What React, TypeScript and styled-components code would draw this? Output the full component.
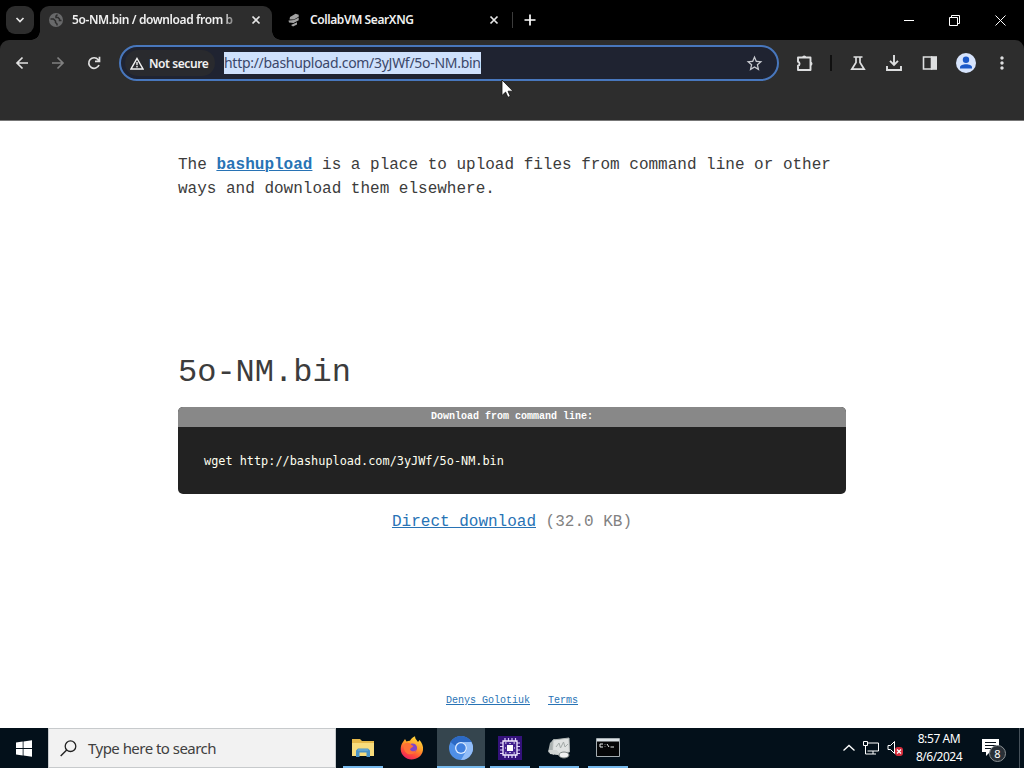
import React from "react";
import styled, { createGlobalStyle, css } from "styled-components";
import { MdMoreVert, MdStarBorder } from "react-icons/md";

const GlobalStyle = createGlobalStyle`
    * {
        box-sizing: border-box;
    }

    body {
        margin: 0;
        overflow: hidden;
        background-color: #fff;
    }
`;

const uiFont = `"Noto Sans", "Open Sans", sans-serif`;
const monoFont = `"Liberation Mono", "Courier New", monospace`;

type IconPropsType = {
    size?: number;
    children: React.ReactNode;
}

// Line icon drawn in a square view box of its own size
const LineIcon: React.FC<IconPropsType> = ({ size = 16, children }) => (
    <Svg width={size} height={size} viewBox={`0 0 ${size} ${size}`}>
        <g fill="none" stroke="currentColor" strokeWidth="1.7">{children}</g>
    </Svg>
);

const TabStrip: React.FC = () => (
    <StyledTabStrip>
        <TabSearch>
            <LineIcon size={10}><path d="M1.5 3 5 6.5 8.5 3" /></LineIcon>
        </TabSearch>
        <Tab $active>
            <Svg width="14" height="14" viewBox="0 0 14 14">
                <circle cx="7" cy="7" r="7" fill="#68696a" />
                <path d="M1.500 6h3l2 2v1.500L8 11v1.500M8.500 1.500 7 3v1.500h2L10.500 6v1.500h2" fill="none" stroke="#2d2d2d" strokeWidth="1.500" />
            </Svg>
            <TabTitle $faded>5o-NM.bin / download from b</TabTitle>
            <LineIcon size={10}><path d="m1.500 1.500 7 7m0-7-7 7" /></LineIcon>
        </Tab>
        <Tab>
            <Svg width="14" height="14" viewBox="0 0 14 14">
                <path d="M3 4 8.500 .8l3.200 1v2L7 6.500H2.500zM1.500 7.500 7 7l4.700-2.500v2.700L6.500 10 2 9.500zM4 12l6-2.800v2.300L6 13.500z" fill="#a2a2a2" />
            </Svg>
            <TabTitle>CollabVM SearXNG</TabTitle>
            <LineIcon size={10}><path d="m1.500 1.500 7 7m0-7-7 7" /></LineIcon>
        </Tab>
        <TabDivider />
        <NewTab>
            <LineIcon size={12}><path d="M6 .5v11M.5 6h11" /></LineIcon>
        </NewTab>
        <WindowControls>
            <Svg width="10" height="11" viewBox="0 0 10 11"><path d="M0 5.500h10" stroke="#fff" /></Svg>
            <Svg width="11" height="11" viewBox="0 0 11 11"><path d="M.5 2.500h8v8h-8zM2.500 2.500v-2h8v8h-2" fill="none" stroke="#fff" /></Svg>
            <Svg width="11" height="11" viewBox="0 0 11 11"><path d="m.5.5 10 10m0-10-10 10" stroke="#fff" /></Svg>
        </WindowControls>
    </StyledTabStrip>
);

const Toolbar: React.FC = () => (
    <StyledToolbar>
        <NavButton>
            <LineIcon size={14}><path d="M13 7H2m5.500-5.500L2 7l5.500 5.500" /></LineIcon>
        </NavButton>
        <NavButton $disabled>
            <LineIcon size={14}><path d="M1 7h11M6.500 1.500 12 7l-5.500 5.500" /></LineIcon>
        </NavButton>
        <NavButton>
            <LineIcon size={14}><path d="M12 9a5.300 5.300 0 1 1-.8-5.300L12.300 5M12.500.8V5.300H8" /></LineIcon>
        </NavButton>
        <AddressBar>
            <SecurityChip>
                <Svg width="14" height="13" viewBox="0 0 14 13">
                    <path d="M7 1.500 13 12H1z" fill="none" stroke="currentColor" strokeWidth="1.500" />
                    <path d="M7 5v3.200m0 .9v1.400" stroke="currentColor" strokeWidth="1.400" />
                </Svg>
                <span>Not secure</span>
            </SecurityChip>
            <SelectedUrl>http://bashupload.com/3yJWf/5o-NM.bin</SelectedUrl>
            <MdStarBorder size={19} color="#c7c9cf" />
            <Cursor width="13" height="20" viewBox="0 0 13 20">
                <path d="M1 1v15.500l3.600-3.400 2.300 5.200 2.400-1L7 12.200h5z" fill="#fff" stroke="#111" strokeWidth=".8" />
            </Cursor>
        </AddressBar>
        <Actions>
            <LineIcon size={18}>
                <path d="M2 3.500h12.500v12.500H2v-4.300a2 2 0 0 0 0-3.900z" strokeWidth="1.900" strokeLinejoin="round" />
                <path d="M6.200 3.500a2 2 0 0 1 4 0zM14.500 7.700a2 2 0 0 1 0 4z" fill="currentColor" stroke="none" />
            </LineIcon>
            <ActionDivider />
            <LineIcon size={16}>
                <path d="M3.500 2h9M6 2v5.500L1.800 14.200h12.400L10 7.500V2" />
            </LineIcon>
            <LineIcon size={16}>
                <path d="M8 0v9.500M4 5.800l4 4 4-4M1 11v4h14v-4" strokeWidth="1.900" />
            </LineIcon>
            <Svg width="16" height="16" viewBox="0 0 16 16">
                <path d="M1.500 2h8v12h-8z" fill="none" stroke="currentColor" strokeWidth="1.600" />
                <path d="M9 1.200h6v13.600H9z" fill="currentColor" />
            </Svg>
            <Svg width="20" height="20" viewBox="0 0 20 20">
                <circle cx="10" cy="10" r="10" fill="#d7e4fc" />
                <circle cx="10" cy="6.800" r="3.200" fill="#1c59c8" />
                <path d="M4 15.500v-1.300c0-4 12-4 12 0v1.300z" fill="#1c59c8" />
            </Svg>
            <MdMoreVert size={20} />
        </Actions>
    </StyledToolbar>
);

const DownloadPage: React.FC = () => (
    <StyledPage>
        <Content>
            <Intro>
                The <PageLink $bold href="#">bashupload</PageLink> is a place to upload files from command line or other ways and download them elsewhere.
            </Intro>
            <FileName>5o-NM.bin</FileName>
            <CommandBox>
                <CommandTitle>Download from command line:</CommandTitle>
                <Command>wget http://bashupload.com/3yJWf/5o-NM.bin</Command>
            </CommandBox>
            <DirectDownload>
                <PageLink href="#">Direct download</PageLink> (32.0 KB)
            </DirectDownload>
            <Footer>
                <PageLink href="#">Denys Golotiuk</PageLink>
                <PageLink href="#">Terms</PageLink>
            </Footer>
        </Content>
    </StyledPage>
);

const Taskbar: React.FC = () => (
    <StyledTaskbar>
        <StartButton>
            <Svg width="16" height="17" viewBox="0 0 16 17">
                <path d="M0 2.500 6.700 1.500v6.500H0zM7.500 1.400 16 .2V8H7.500zM0 8.900h6.700v6.500L0 14.500zM7.500 8.900H16v7.800l-8.500-1.200z" fill="#fff" />
            </Svg>
        </StartButton>
        <SearchBox>
            <Svg width="17" height="17" viewBox="0 0 17 17">
                <circle cx="10.500" cy="6.200" r="5.300" fill="none" stroke="#222" strokeWidth="1.300" />
                <path d="m6.700 10-6 6" stroke="#222" strokeWidth="1.400" />
            </Svg>
            <span>Type here to search</span>
        </SearchBox>
        <TaskList>
            <TaskButton $running>
                <Svg width="22" height="20" viewBox="0 0 22 20">
                    <path d="M0 1h8l2 2h12v15H0z" fill="#e6b94a" />
                    <path d="M0 5h22v13H0z" fill="#f8dc7c" />
                    <path d="M4 19v-6.500l2-2h10l2 2V19h-3.500v-4.500h-7V19z" fill="#4a93c6" />
                    <path d="M6 12h10" stroke="#79b5da" />
                </Svg>
            </TaskButton>
            <TaskButton>
                <Svg width="24" height="24" viewBox="0 0 24 24">
                    <defs>
                        <linearGradient id="fox" x1="0.8" y1="0" x2="0.3" y2="1">
                            <stop offset="0" stopColor="#ffe23f" />
                            <stop offset=".45" stopColor="#ff9a28" />
                            <stop offset=".75" stopColor="#ff4a3a" />
                            <stop offset="1" stopColor="#ec2161" />
                        </linearGradient>
                    </defs>
                    <path d="M3 6 5 3l1.500 2.500C8 5 9 4.500 10 4.800 11 2.500 13 1 15 .3c0 3 2 4 3 5.700l1.500-2C22 7 23.500 10 23 14c-.8 6-6 9.500-11.500 9.500S1 19 .7 13.500C.6 10 1.500 8 3 6z" fill="url(#fox)" />
                    <circle cx="12.500" cy="12" r="4.600" fill="#8145c8" />
                    <path d="M4.500 7.500c3-1.500 5.500-1 7 1.500l2 1c-1 2-3 1.500-3.500 3.500 1 2 4 2.500 6 .5-1 5-8 6-11 1.500-1.500-2.500-1.500-5.500-.5-8z" fill="#ff7136" />
                </Svg>
            </TaskButton>
            <TaskButton $running $active>
                <Svg width="24" height="24" viewBox="0 0 24 24">
                    <circle cx="12" cy="12" r="12" fill="#4f8fe6" />
                    <path d="M1.600 6A12 12 0 0 1 22.400 6H12a6 6 0 0 0-5.600 4z" fill="#2c69c4" />
                    <path d="M22.400 6A12 12 0 0 1 12 24l5.200-9A6 6 0 0 0 12 6z" fill="#92bdf8" />
                    <circle cx="12" cy="12" r="6" fill="#dceaff" />
                    <circle cx="12" cy="12" r="4.700" fill="#4080df" />
                </Svg>
            </TaskButton>
            <TaskButton $running>
                <Svg width="24" height="24" viewBox="0 0 24 24">
                    <path d="M0 0h24v24H0z" fill="#34127b" />
                    <path d="M7 2v20M10.500 2v20M14 2v20M17.500 2v20M2 7h20M2 10.500h20M2 14h20M2 17.500h20" stroke="#dacbff" strokeWidth="1.200" />
                    <path d="M5 5h14v14H5z" fill="#42208f" stroke="#f4edff" strokeWidth="1.300" />
                    <path d="M9 9h6v6H9z" fill="#fff" />
                    <path d="M7 7h1.500m7 0H17M7 17h1.500m7 0H17M7 12h1m8 0h1M12 7v1m0 8v1" stroke="#fff" strokeWidth="1.200" />
                </Svg>
            </TaskButton>
            <TaskButton $running>
                <Svg width="24" height="22" viewBox="0 0 24 22">
                    <path d="m3 6 4-4 2 1-2 15-6-3z" fill="#a9b0af" />
                    <path d="m6 3 16-2 .5 14-14 2-3-3z" fill="#dfe2e1" stroke="#b3b8b7" />
                    <path d="m9 10 3-4 1.500 5 3-6 1.500 5 3-3" fill="none" stroke="#a3aaa8" />
                    <path d="M1.500 13h8l3 3H20v3l-5 2-4-3-8-1z" fill="#d1d5d4" />
                    <ellipse cx="17" cy="18" rx="5" ry="3" fill="#f0f1f1" stroke="#7d8483" />
                </Svg>
            </TaskButton>
            <TaskButton $running>
                <Svg width="24" height="20" viewBox="0 0 24 20">
                    <path d="M.5.5h23v18H.5z" fill="#050607" stroke="#a5adb1" />
                    <path d="M1 1h22v2.500H1z" fill="#dce3e7" />
                    <path d="M7 6H4v3h3m2-2.500v.5m0 1.500V9m2-3 2 3m1.500 0H18" fill="none" stroke="#e8eaea" />
                </Svg>
            </TaskButton>
        </TaskList>
        <Tray>
            <Svg width="12" height="8" viewBox="0 0 12 8"><path d="m.5 6.500 5.500-5 5.500 5" fill="none" stroke="#fff" strokeWidth="1.300" /></Svg>
            <Svg width="18" height="16" viewBox="0 0 18 16">
                <path d="M5.500 3h11v8h-11m5.500 0v3m-4 0h7M3.500 6v8H7M1.500 1.500h4v4h-4z" fill="none" stroke="#fff" />
            </Svg>
            <Svg width="18" height="17" viewBox="0 0 18 17">
                <path d="M1 5.500h2.500l4-4v12l-4-4H1z" fill="none" stroke="#fff" />
                <rect x="8" y="7" width="8" height="9" rx="3" fill="#d62c3b" />
                <path d="m10 9.500 4 4m0-4-4 4" stroke="#fff" strokeWidth="1.300" />
            </Svg>
            <Clock>
                <ClockLine>8:57 AM</ClockLine>
                <ClockLine $date>8/6/2024</ClockLine>
            </Clock>
            <Notifications>
                <Svg width="18" height="18" viewBox="0 0 18 18">
                    <path d="M0 0h17v13H8l-4 4v-4H0z" fill="#fff" />
                    <path d="M3 3.500h11M3 6.500h11M3 9.500h8" stroke="#07111b" />
                </Svg>
                <Count>8</Count>
            </Notifications>
            <ShowDesktop />
        </Tray>
    </StyledTaskbar>
);

// Whole desktop: browser window above the taskbar
const App: React.FC = () => (
    <Desktop>
        <GlobalStyle />
        <TabStrip />
        <Toolbar />
        <DownloadPage />
        <Taskbar />
    </Desktop>
);

export default App;

const Desktop = styled.div`
    display: flex;
    flex-direction: column;
    width: 1024px;
    height: 768px;
    overflow: hidden;
    background-color: #000;
    font-family: ${uiFont};
`;

const Svg = styled.svg`
    display: block;
    flex-shrink: 0;
`;

const StyledTabStrip = styled.div`
    display: flex;
    align-items: center;
    height: 40px;
    padding-left: 6px;
    background-color: #000;
    color: #e6e6e6;
`;

const TabSearch = styled.div`
    display: flex;
    align-items: center;
    justify-content: center;
    width: 28px;
    height: 28px;
    margin-right: 6px;
    border-radius: 9px;
    background-color: #2d2d2d;
`;

const Tab = styled.div<{ $active?: boolean }>`
    display: flex;
    align-items: center;
    width: 232px;
    height: 34px;
    margin-top: 6px;
    padding: 0 11px 6px 9px;
    border-radius: 9px 9px 0 0;
    position: relative;

    ${({ $active }) => $active ? css`
        background-color: #2d2d2d;

        /* curved feet of the selected tab */
        &::before,
        &::after {
            content: "";
            position: absolute;
            bottom: 0;
            width: 9px;
            height: 9px;
        }

        &::before {
            right: 100%;
            background: radial-gradient(circle at 0 0, transparent 8.5px, #2d2d2d 9px);
        }

        &::after {
            left: 100%;
            background: radial-gradient(circle at 100% 0, transparent 8.5px, #2d2d2d 9px);
        }
    ` : css`
        padding-left: 15px;
        padding-right: 5px;
    `}
`;

const TabTitle = styled.span<{ $faded?: boolean }>`
    flex: 1;
    margin: 0 13px 0 9px;
    overflow: hidden;
    white-space: nowrap;
    font-size: 12px;
    font-weight: 600;
    line-height: 18px;
    letter-spacing: -0.4px;
    color: #f0f0f0;

    ${({ $faded }) => $faded && css`
        mask-image: linear-gradient(to right, #000 150px, transparent 170px);
    `}
`;

const TabDivider = styled.div`
    width: 1px;
    height: 16px;
    margin-left: 8px;
    background-color: #3c3c3c;
`;

const NewTab = styled.div`
    margin-left: 11px;
    color: #fff;
`;

const WindowControls = styled.div`
    display: flex;
    align-items: center;
    gap: 35px;
    margin-left: auto;
    padding-right: 18px;
`;

const StyledToolbar = styled.div`
    display: flex;
    align-items: flex-start;
    height: 81px;
    padding: 5px 12px 0 4px;
    border-radius: 9px 9px 0 0;
    border-bottom: 1px solid #777;
    background-color: #2d2d2d;
    color: #dedfe0;
`;

const NavButton = styled.div<{ $disabled?: boolean }>`
    display: flex;
    align-items: center;
    justify-content: center;
    width: 36px;
    height: 36px;
    color: ${({ $disabled }) => $disabled ? "#808080" : "#e1e1e1"};
`;

const AddressBar = styled.div`
    position: relative;
    display: flex;
    align-items: center;
    width: 660px;
    height: 36px;
    margin-left: 7px;
    padding: 0 13px 0 4px;
    border: 2px solid #4877bd;
    border-radius: 18px;
    background-color: #1f2331;

    > svg:not(:last-child) {
        margin-left: auto;
    }
`;

const SecurityChip = styled.div`
    display: flex;
    align-items: center;
    gap: 5px;
    width: 90px;
    height: 26px;
    padding-left: 5px;
    border-radius: 13px;
    background-color: #292a2e;
    color: #f1f1f1;
    font-size: 12px;
    font-weight: 600;
    white-space: nowrap;
    letter-spacing: -0.42px;
`;

const SelectedUrl = styled.span`
    width: 257px;
    height: 22px;
    margin-left: 9px;
    background-color: #cfe1fc;
    color: #3b4769;
    font-size: 14px;
    line-height: 22px;
    letter-spacing: -0.29px;
    white-space: nowrap;
`;

/* mouse pointer lying over the lower edge of the address bar */
const Cursor = styled(Svg)`
    position: absolute;
    left: 380px;
    top: 32px;
`;

const Actions = styled.div`
    display: flex;
    align-items: center;
    height: 36px;
    margin-left: 17px;

    > :nth-child(3) {
        margin-left: 18px;
    }

    > :nth-child(4),
    > :nth-child(5) {
        margin-left: 20px;
    }

    > :nth-child(6) {
        margin-left: 18px;
    }

    > :nth-child(7) {
        margin-left: 16px;
    }
`;

const ActionDivider = styled.div`
    width: 2px;
    height: 16px;
    margin-left: 16px;
    background-color: #101010;
`;

const StyledPage = styled.main`
    height: 607px;
    background-color: #fff;
    color: #333;
    font-family: ${monoFont};
    font-size: 16px;
    line-height: 24px;
`;

const Content = styled.div`
    display: flex;
    flex-direction: column;
    width: 668px;
    margin: 0 auto;
    padding-top: 32px;
`;

const Intro = styled.p`
    margin: 0;
    color: #3c3c3c;
`;

const PageLink = styled.a<{ $bold?: boolean }>`
    color: #2873b5;
    font-weight: ${({ $bold }) => $bold ? 700 : 400};
    text-decoration: underline;
    text-decoration-thickness: 1px;
`;

const FileName = styled.h1`
    margin: 152px 0 15px;
    font-size: 32px;
    font-weight: 400;
    line-height: 39px;
    color: #3c3c3c;
`;

const CommandBox = styled.div`
    display: flex;
    flex-direction: column;
    height: 87px;
    overflow: hidden;
    border-radius: 5px;
    background-color: #222;
`;

const CommandTitle = styled.div`
    flex-shrink: 0;
    height: 20px;
    background-color: #888;
    color: #fff;
    font-size: 10px;
    font-weight: 700;
    line-height: 19px;
    text-align: center;
`;

const Command = styled.code`
    padding: 24px 26px 23px;
    color: #fffff0;
    font-family: "DejaVu Sans Mono", monospace;
    font-size: 11.87px;
    line-height: 20px;
`;

const DirectDownload = styled.p`
    margin: 16px 0 0;
    text-align: center;
    color: #828282;
`;

const Footer = styled.footer`
    display: flex;
    justify-content: center;
    gap: 18px;
    margin-top: 159px;
    font-size: 10px;
    line-height: 16px;
`;

const StyledTaskbar = styled.div`
    display: flex;
    height: 40px;
    background-color: #03101a;
    color: #fff;
`;

const StartButton = styled.div`
    display: flex;
    align-items: center;
    justify-content: center;
    width: 48px;
`;

const SearchBox = styled.div`
    display: flex;
    align-items: center;
    gap: 11px;
    width: 288px;
    padding-left: 11px;
    border: 1px solid #c7cacc;
    background-color: #f2f2f2;
    color: #404040;
    font-size: 15px;
    letter-spacing: -0.53px;
    white-space: nowrap;
`;

const TaskList = styled.div`
    display: flex;
    gap: 1px;
    padding-left: 3px;
`;

const TaskButton = styled.div<{ $running?: boolean; $active?: boolean }>`
    display: flex;
    align-items: center;
    justify-content: center;
    width: 48px;
    background-color: ${({ $active }) => $active ? "#35454e" : "transparent"};

    ${({ $running, $active }) => $running && css`
        background-image: linear-gradient(#76b9ed, #76b9ed);
        background-position: center bottom;
        background-repeat: no-repeat;
        background-size: ${$active ? 48 : 40}px 2px;
    `}
`;

const Tray = styled.div`
    display: flex;
    align-items: center;
    gap: 7px;
    margin-left: auto;
`;

const Clock = styled.div`
    width: 58px;
    margin-left: -2px;
    font-size: 12px;
    line-height: 18px;
    text-align: center;
    white-space: nowrap;
`;

const ClockLine = styled.div<{ $date?: boolean }>`
    letter-spacing: ${({ $date }) => $date ? -0.5 : -0.4}px;
`;

const Notifications = styled.div`
    position: relative;
    margin-left: 7px;
`;

const Count = styled.span`
    position: absolute;
    left: 7px;
    top: 6px;
    width: 17px;
    height: 17px;
    border: 1px solid #8a9094;
    border-radius: 50%;
    background-color: #293037;
    font-size: 11px;
    line-height: 15px;
    text-align: center;
`;

const ShowDesktop = styled.div`
    width: 5px;
    height: 40px;
    margin-left: 12px;
    border-left: 1px solid #46515a;
`;
